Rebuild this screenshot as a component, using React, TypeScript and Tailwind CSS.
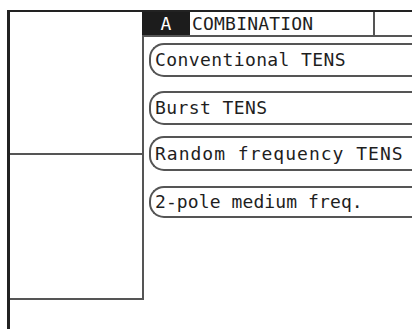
import React from "react";

const font = { fontFamily: '"DejaVu Sans Mono", "Liberation Mono", monospace' };

export default function App() {
  return (
    <div className="w-[412px] h-[329px] bg-white overflow-hidden text-[#1e1e1e]" style={font}>
      <div className="pt-[10px] pl-[7px]">
        <div className="flex h-[319px] border-t-2 border-l-[3px] border-[#222]">
          {/* left column */}
          <div className="w-[132px] flex flex-col shrink-0">
            <div className="h-[143px] border-b-2 border-[#555]" />
            <div className="h-[145px] border-b-2 border-[#555]" />
          </div>
          {/* right column */}
          <div className="flex-1 flex flex-col">
            <div className="flex h-[25px] border-b-2 border-[#555] items-stretch">
              <div className="w-[48px] bg-[#1c1c1c] text-white flex items-center justify-center text-[18px] leading-none">
                A
              </div>
              <div className="w-[185px] pl-[2px] border-r-2 border-[#555] flex items-center text-[18px] leading-none tracking-[0.2px]">
                COMBINATION
              </div>
              <div className="flex-1" />
            </div>
            <div className="h-[263px] border-l-2 border-[#555] pl-[5px] flex flex-col">
              <div className="mt-[6px] h-[34px] border-2 border-r-0 border-[#555] rounded-l-[15px] flex items-center pl-[4px] text-[18px] leading-none tracking-[0.4px]">
                Conventional TENS
              </div>
              <div className="mt-[14px] h-[34px] border-2 border-r-0 border-[#555] rounded-l-[15px] flex items-center pl-[4px] text-[18px] leading-none tracking-[0.4px]">
                Burst TENS
              </div>
              <div className="mt-[11px] h-[35px] border-2 border-r-0 border-[#555] rounded-l-[15px] flex items-center pl-[4px] text-[18px] leading-none tracking-[1px]">
                Random frequency TENS
              </div>
              <div className="mt-[15px] h-[32px] border-2 border-r-0 border-[#555] rounded-l-[15px] flex items-center pl-[4px] text-[18px] leading-none tracking-[0.1px]">
                2-pole medium freq.
              </div>
            </div>
          </div>
        </div>
      </div>
    </div>
  );
}
